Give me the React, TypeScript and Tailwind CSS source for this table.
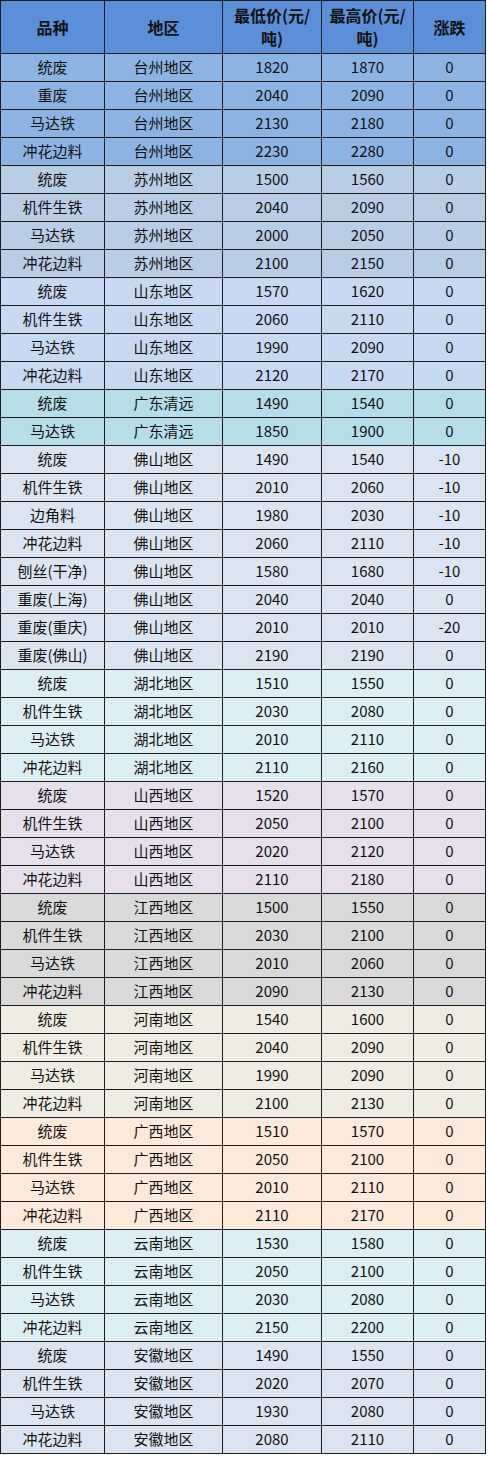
type Row = [string, string, number, number, number];

type Group = { bg: string; rows: Row[] };

const groups: Group[] = [
  {
    bg: "bg-[#8db3e2]",
    rows: [
      ["统废", "台州地区", 1820, 1870, 0],
      ["重废", "台州地区", 2040, 2090, 0],
      ["马达铁", "台州地区", 2130, 2180, 0],
      ["冲花边料", "台州地区", 2230, 2280, 0],
    ],
  },
  {
    bg: "bg-[#b9cde5]",
    rows: [
      ["统废", "苏州地区", 1500, 1560, 0],
      ["机件生铁", "苏州地区", 2040, 2090, 0],
      ["马达铁", "苏州地区", 2000, 2050, 0],
      ["冲花边料", "苏州地区", 2100, 2150, 0],
    ],
  },
  {
    bg: "bg-[#c6d9f0]",
    rows: [
      ["统废", "山东地区", 1570, 1620, 0],
      ["机件生铁", "山东地区", 2060, 2110, 0],
      ["马达铁", "山东地区", 1990, 2090, 0],
      ["冲花边料", "山东地区", 2120, 2170, 0],
    ],
  },
  {
    bg: "bg-[#b7dde8]",
    rows: [
      ["统废", "广东清远", 1490, 1540, 0],
      ["马达铁", "广东清远", 1850, 1900, 0],
    ],
  },
  {
    bg: "bg-[#dbe5f1]",
    rows: [
      ["统废", "佛山地区", 1490, 1540, -10],
      ["机件生铁", "佛山地区", 2010, 2060, -10],
      ["边角料", "佛山地区", 1980, 2030, -10],
      ["冲花边料", "佛山地区", 2060, 2110, -10],
      ["刨丝(干净)", "佛山地区", 1580, 1680, -10],
      ["重废(上海)", "佛山地区", 2040, 2040, 0],
      ["重废(重庆)", "佛山地区", 2010, 2010, -20],
      ["重废(佛山)", "佛山地区", 2190, 2190, 0],
    ],
  },
  {
    bg: "bg-[#dbeef4]",
    rows: [
      ["统废", "湖北地区", 1510, 1550, 0],
      ["机件生铁", "湖北地区", 2030, 2080, 0],
      ["马达铁", "湖北地区", 2010, 2110, 0],
      ["冲花边料", "湖北地区", 2110, 2160, 0],
    ],
  },
  {
    bg: "bg-[#e5e0ec]",
    rows: [
      ["统废", "山西地区", 1520, 1570, 0],
      ["机件生铁", "山西地区", 2050, 2100, 0],
      ["马达铁", "山西地区", 2020, 2120, 0],
      ["冲花边料", "山西地区", 2110, 2180, 0],
    ],
  },
  {
    bg: "bg-[#d9d9d9]",
    rows: [
      ["统废", "江西地区", 1500, 1550, 0],
      ["机件生铁", "江西地区", 2030, 2100, 0],
      ["马达铁", "江西地区", 2010, 2060, 0],
      ["冲花边料", "江西地区", 2090, 2130, 0],
    ],
  },
  {
    bg: "bg-[#eeece1]",
    rows: [
      ["统废", "河南地区", 1540, 1600, 0],
      ["机件生铁", "河南地区", 2040, 2090, 0],
      ["马达铁", "河南地区", 1990, 2090, 0],
      ["冲花边料", "河南地区", 2100, 2130, 0],
    ],
  },
  {
    bg: "bg-[#fde9d9]",
    rows: [
      ["统废", "广西地区", 1510, 1570, 0],
      ["机件生铁", "广西地区", 2050, 2100, 0],
      ["马达铁", "广西地区", 2010, 2110, 0],
      ["冲花边料", "广西地区", 2110, 2170, 0],
    ],
  },
  {
    bg: "bg-[#daeef3]",
    rows: [
      ["统废", "云南地区", 1530, 1580, 0],
      ["机件生铁", "云南地区", 2050, 2100, 0],
      ["马达铁", "云南地区", 2030, 2080, 0],
      ["冲花边料", "云南地区", 2150, 2200, 0],
    ],
  },
  {
    bg: "bg-[#dbe5f1]",
    rows: [
      ["统废", "安徽地区", 1490, 1550, 0],
      ["机件生铁", "安徽地区", 2020, 2070, 0],
      ["马达铁", "安徽地区", 1930, 2080, 0],
      ["冲花边料", "安徽地区", 2080, 2110, 0],
    ],
  },
];

const cell = "flex items-center justify-center h-[27px]";
const head = "flex items-center justify-center text-center h-[52px] bg-[#5b8fd8] font-bold text-[16px] leading-[23px] text-[#111]";

export default function App() {
  return (
    <div className="bg-white min-h-[1457px] font-['Noto_Sans_CJK_SC','Noto_Sans',sans-serif]">
      <div className="grid w-[486px] grid-cols-[103px_117px_98px_91px_71px] gap-px p-px bg-[#1c1c1c] text-[15px] text-[#111]">
        <div className={head}>品种</div>
        <div className={head}>地区</div>
        <div className={head}>
          最低价(元/
          <br />
          吨)
        </div>
        <div className={head}>
          最高价(元/
          <br />
          吨)
        </div>
        <div className={head}>涨跌</div>

        {groups.map((g) =>
          g.rows.map(([name, area, low, high, chg], i) => (
            <div key={area + name + i} className="contents">
              <div className={`${cell} ${g.bg}`}>{name}</div>
              <div className={`${cell} ${g.bg}`}>{area}</div>
              <div className={`${cell} ${g.bg}`}>{low}</div>
              <div className={`${cell} ${g.bg}`}>{high}</div>
              <div className={`${cell} ${g.bg}`}>{chg}</div>
            </div>
          ))
        )}
      </div>
    </div>
  );
}
